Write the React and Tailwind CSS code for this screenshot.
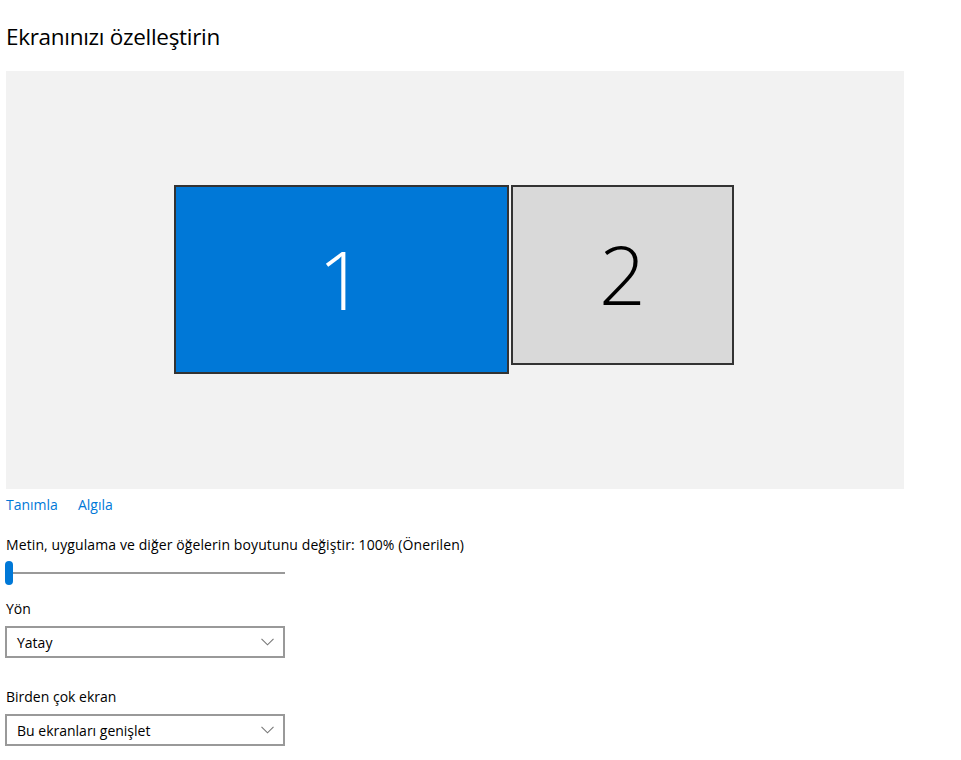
import React from 'react';

const font = { fontFamily: '"Open Sans", "Noto Sans", sans-serif' };

const Chevron = () => (
  <svg width="13" height="8" viewBox="0 0 13 8" fill="none">
    <path d="M0.5 0.8 L6.5 6.8 L12.5 0.8" stroke="#777" strokeWidth="1.1" />
  </svg>
);

const Dropdown = ({ value }) => (
  <div className="w-[280px] h-[32px] border-2 border-[#999] flex items-center justify-between pl-[10px] pr-[9px] text-[14px] text-black">
    <span>{value}</span>
    <Chevron />
  </div>
);

const App = () => {
  return (
    <div className="bg-white w-[961px] h-[760px] pl-[5px] text-black" style={font}>
      <h1 className="pt-[22px] h-[71px] pl-[1px] text-[22.5px] leading-[30px] font-normal tracking-[-0.3px]">
        Ekranınızı özelleştirin
      </h1>

      {/* Display arrangement canvas */}
      <div className="ml-[1px] w-[898px] h-[418px] bg-[#f2f2f2] flex items-start gap-[2px] pl-[168px] pt-[114px]">
        <div className="w-[335px] h-[189px] border-2 border-[#333] bg-[#0078d7] flex items-center justify-center">
          <span className="text-white text-[82px] font-light leading-none -mt-[4px]">1</span>
        </div>
        <div className="w-[223px] h-[180px] border-2 border-[#333] bg-[#d9d9d9] flex items-center justify-center">
          <span className="text-black text-[82px] font-light leading-none -mt-[4px]">2</span>
        </div>
      </div>

      <div className="flex gap-[20px] pt-[6px] pl-[1px] text-[14px] leading-[20px] text-[#0078d7]">
        <span>Tanımla</span>
        <span>Algıla</span>
      </div>

      <div className="pt-[20px] pl-[1px] text-[14px] leading-[20px] tracking-[0.1px]">
        Metin, uygulama ve diğer öğelerin boyutunu değiştir: 100% (Önerilen)
      </div>

      {/* Scale slider */}
      <div className="relative w-[280px] h-[24px] mt-[6px] flex items-center">
        <div className="w-full h-[2px] bg-[#999]" />
        <div className="absolute left-0 top-0 w-[8px] h-[24px] rounded-full bg-[#0078d7]" />
      </div>

      <div className="pt-[14px] pb-[7px] pl-[1px] text-[14px] leading-[20px]">Yön</div>
      <Dropdown value="Yatay" />

      <div className="pt-[29px] pb-[7px] pl-[1px] text-[14px] leading-[20px]">Birden çok ekran</div>
      <Dropdown value="Bu ekranları genişlet" />
    </div>
  );
};

export default App;
